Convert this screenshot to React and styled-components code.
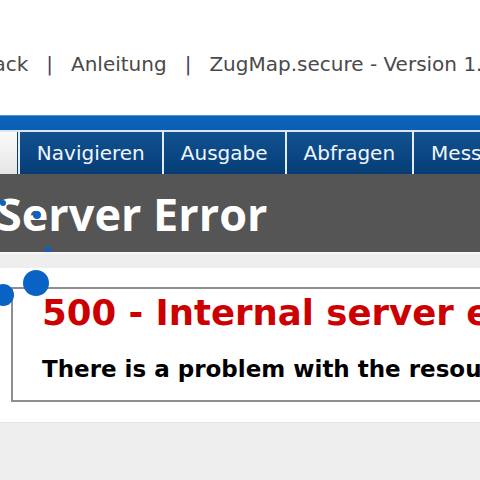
import React from "react";
import styled, { createGlobalStyle } from "styled-components";

const GlobalStyle = createGlobalStyle`
  html, body {
    margin: 0;
    padding: 0;
    background: #eeeeee;
    overflow: hidden;
  }
  #root {
    width: 480px;
    height: 480px;
  }
`;

const tabs = [
  { label: "Start", active: true },
  { label: "Navigieren" },
  { label: "Ausgabe" },
  { label: "Abfragen" },
  { label: "Messen" },
];

const dots = [
  { cx: 36, cy: 283, r: 13 },
  { cx: 3, cy: 295, r: 11 },
  { cx: 3, cy: 203, r: 3 },
  { cx: 37, cy: 215, r: 4 },
  { cx: 48, cy: 249, r: 3 },
];

function App() {
  return (
    <Page>
      <GlobalStyle />
      <TopBar>
        <LinkRow>
          <TopLink>Feedback</TopLink>
          <Pipe>|</Pipe>
          <TopLink>Anleitung</TopLink>
          <Pipe>|</Pipe>
          <TopLink>ZugMap.secure - Version 1.0</TopLink>
        </LinkRow>
      </TopBar>
      <BlueStrip />
      <TabBar>
        {tabs.map((t) => (
          <Tab key={t.label} $active={t.active}>
            {t.label}
          </Tab>
        ))}
      </TabBar>

      {/* eingebettete IIS Fehlerseite */}
      <ErrorHeader>
        <Title>Server Error</Title>
      </ErrorHeader>
      <Content>
        <Fieldset>
          <ErrorCode>500 - Internal server error.</ErrorCode>
          <ErrorText>
            There is a problem with the resource you are looking for, and it
            cannot be displayed.
          </ErrorText>
        </Fieldset>
      </Content>

      <Marks width="480" height="480" viewBox="0 0 480 480">
        {dots.map((d, i) => (
          <circle key={i} cx={d.cx} cy={d.cy} r={d.r} fill="#0863c4" />
        ))}
      </Marks>
    </Page>
  );
}

export default App;

const Page = styled.div`
  position: relative;
  width: 480px;
  height: 480px;
  overflow: hidden;
  background: #eeeeee;
`;

const TopBar = styled.div`
  height: 115px;
  background: #ffffff;
  box-sizing: border-box;
  padding-top: 50px;
`;

const LinkRow = styled.div`
  display: flex;
  align-items: baseline;
  white-space: nowrap;
  margin-left: -67px;
  font-family: "DejaVu Sans", Verdana, sans-serif;
  font-size: 20px;
  line-height: 28px;
`;

const TopLink = styled.span`
  color: #4a4a4a;
`;

const Pipe = styled.span`
  color: #4d3d5e;
  margin: 0 18px;
`;

const BlueStrip = styled.div`
  height: 15px;
  background: linear-gradient(#4f93d6 0, #4f93d6 1px, #0a64bb 1px, #0b5fb2 100%);
  border-bottom: 2px solid #dbe6f1;
`;

const TabBar = styled.div`
  display: flex;
  height: 42px;
  margin-left: -66px;
  white-space: nowrap;
  background: #e4ecf4;
`;

const Tab = styled.div`
  flex: none;
  display: flex;
  align-items: center;
  padding: 0 17px 0 17px;
  margin-right: 2px;
  font-family: "DejaVu Sans", Verdana, sans-serif;
  font-size: 20px;
  color: ${(p) => (p.$active ? "#333333" : "#f2f6fb")};
  background: ${(p) =>
    p.$active
      ? "linear-gradient(#fafafa, #e6e6e6)"
      : "linear-gradient(#11528f, #0a4683 60%, #063c72)"};
  border-right: ${(p) => (p.$active ? "1px solid #0a3d6e" : "none")};
`;

const ErrorHeader = styled.div`
  height: 78px;
  background: #555555;
  border-bottom: 2px solid #f6f6f6;
  display: flex;
  align-items: center;
  overflow: hidden;
`;

const Title = styled.h1`
  margin: 0 0 0 -3px;
  font-family: "Open Sans", "Trebuchet MS", sans-serif;
  font-weight: 700;
  font-size: 45px;
  line-height: 1;
  color: #ffffff;
  white-space: nowrap;
`;

const Content = styled.div`
  margin-top: 14px;
  background: #ffffff;
  padding: 19px 0 20px 11px;
  border-bottom: 1px solid #e6e6e6;
`;

const Fieldset = styled.div`
  border: 2px solid #8e8e8e;
  border-right: none;
  padding: 4px 0 17px 29px;
  white-space: nowrap;
  overflow: hidden;
  font-family: "DejaVu Sans", Verdana, sans-serif;
  font-weight: 700;
`;

const ErrorCode = styled.h2`
  margin: 0;
  font-size: 35.5px;
  line-height: 40px;
  color: #cc0000;
`;

const ErrorText = styled.h3`
  margin: 22px 0 0 0;
  font-size: 23px;
  line-height: 28px;
  color: #000000;
`;

const Marks = styled.svg`
  position: absolute;
  left: 0;
  top: 0;
  pointer-events: none;
`;
